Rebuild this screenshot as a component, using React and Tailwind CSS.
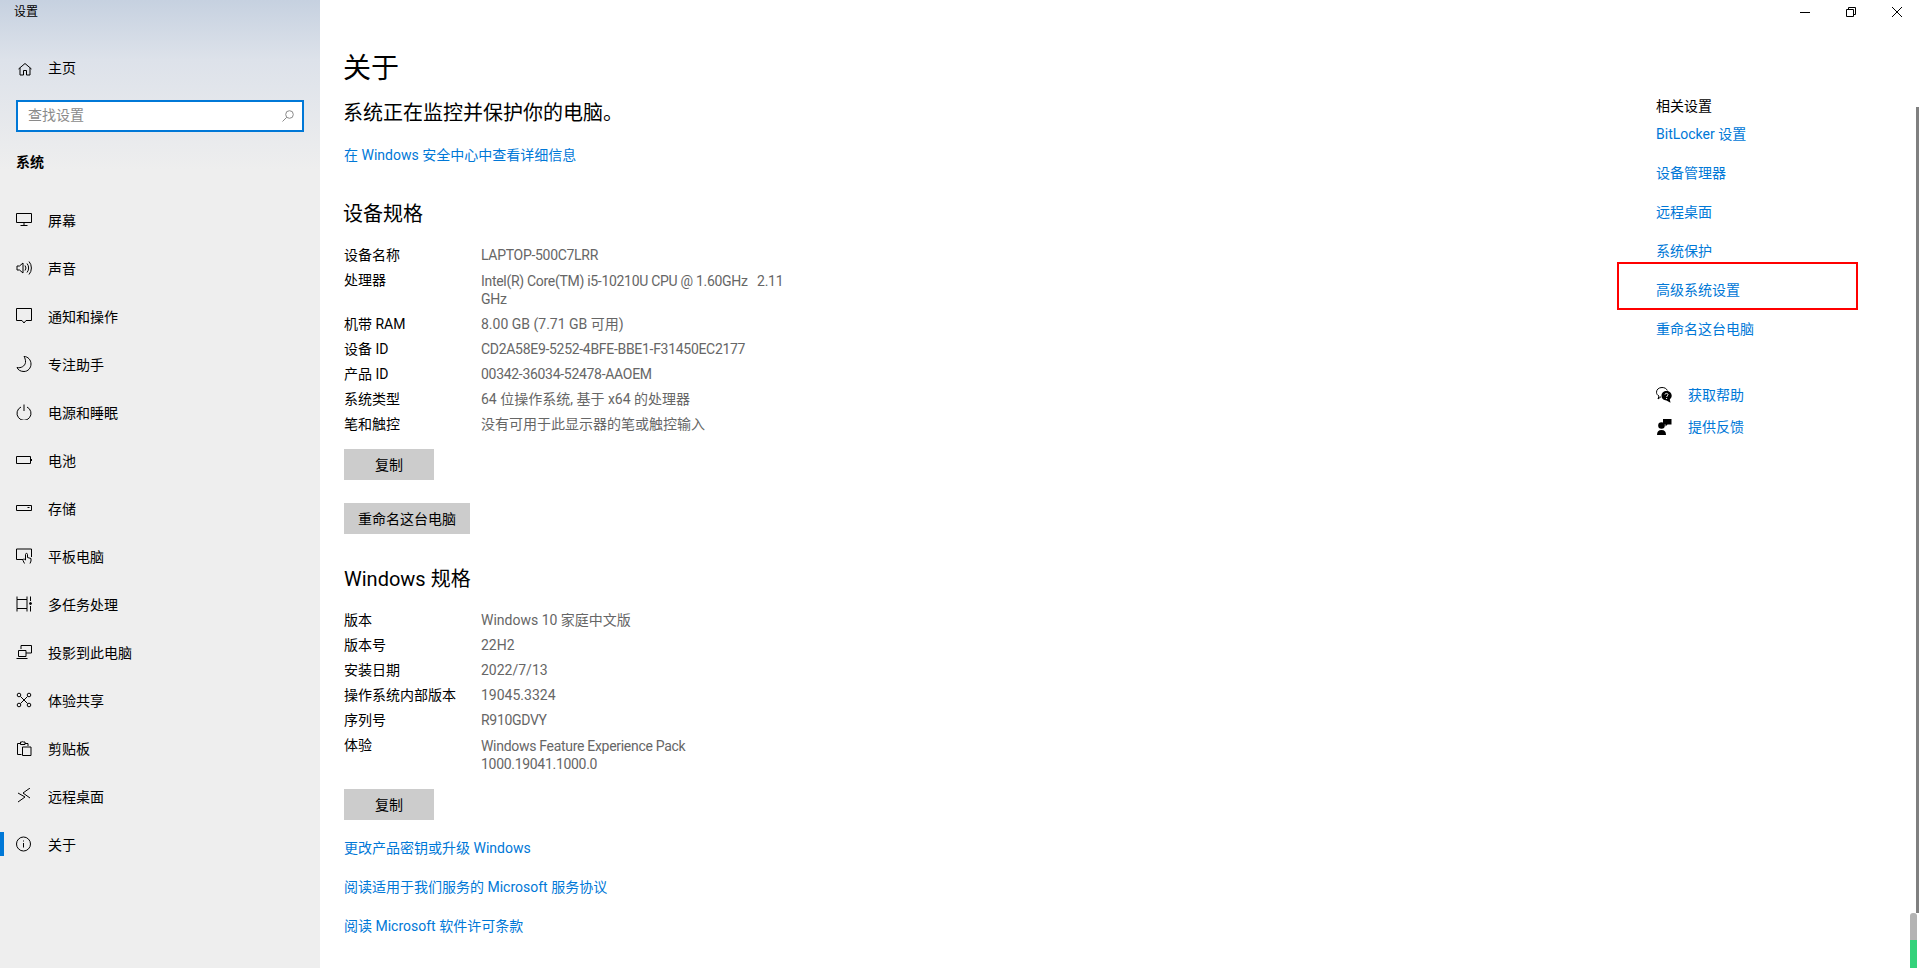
import React from 'react';

const Icon = ({ children, className = 'w-4 h-4' }) => (
  <svg viewBox="0 0 16 16" className={`${className} shrink-0`} fill="none" stroke="currentColor" strokeWidth="1">
    {children}
  </svg>
);

const navItems = [
  ['屏幕', <><path d="M.5 1.5H15.5V10.5H.5Z" /><path d="M8 10.5V13M4.5 13.5H11.5" /></>],
  ['声音', <><path d="M1 6H3.5L7 3V13L3.5 10H1Z" /><path d="M9 5.5a4 4 0 0 1 0 5M11 3.5a7 7 0 0 1 0 9M13 1.5a10 10 0 0 1 0 13" /></>],
  ['通知和操作', <path d="M.5.5H15.5V12.5H10L8 15L6 12.5H.5Z" />],
  ['专注助手', <path d="M8 .5C12 .5 15 4 15 8C15 12 12 15.5 8 15.5C4.5 15.5 2 14 1 11.5C5 12.5 9 10 9.5 6.5C9.7 4 9 2 8 .5Z" />],
  ['电源和睡眠', <path d="M5 3a7 7 0 1 0 6 0M8 .5V7" />],
  ['电池', <path d="M.5 4.5H14.5V11.5H.5ZM15.5 7V9" />],
  ['存储', <path d="M.5 5.5H15.5V10.5H.5ZM11.5 7.5H13.5" />],
  ['平板电脑', <path d="M7 11.5H.5V1H15.5V9M8.5 15.5L7 12.5C6.5 11 8 10.5 8.8 11.5L9.5 12V6.5C9.5 5 11.5 5 11.5 6.5V9.5L15 10.5V13L14 15.5" />],
  ['多任务处理', <><path d="M1 .5V3.5H11V.5M1 15.5V12.5H11V15.5M1 3.5V12.5M11 3.5V12.5M14.5 .5V5M14.5 10V15.5" /><circle cx="14.5" cy="7.5" r="1" fill="currentColor" /></>],
  ['投影到此电脑', <path d="M5 5V1.5H15.5V9H10M2.5 6.5H10V12.5H2.5ZM.5 14.5H11.5" />],
  ['体验共享', <><circle cx="3" cy="3" r="1.8" /><circle cx="13" cy="3" r="1.8" /><circle cx="3" cy="13" r="1.8" /><circle cx="13" cy="13" r="1.8" /><path d="M4.5 4.5L11.5 11.5M11.5 4.5L4.5 11.5" /></>],
  ['剪贴板', <path d="M5.5 14.5H1.5V3.5H4M9 3.5H12V6M4.5 4.5V2H6A1 1 0 0 1 7.5 2H9V4.5ZM6.5 7H15V15.5H6.5Z" />],
  ['远程桌面', <path d="M2 5L9 9L2 14M14 0L7 5L14 10" />],
  ['关于', <><circle cx="7.5" cy="8" r="7" /><path d="M7.5 7V11.5M7.5 4.5V5.5" /></>],
];

const deviceSpecs = [
  ['设备名称', 'LAPTOP-500C7LRR', false, true],
  ['处理器', 'Intel(R) Core(TM) i5-10210U CPU @ 1.60GHz   2.11 GHz', true, true],
  ['机带 RAM', '8.00 GB (7.71 GB 可用)'],
  ['设备 ID', 'CD2A58E9-5252-4BFE-BBE1-F31450EC2177', false, true],
  ['产品 ID', '00342-36034-52478-AAOEM', false, true],
  ['系统类型', '64 位操作系统, 基于 x64 的处理器'],
  ['笔和触控', '没有可用于此显示器的笔或触控输入'],
];

const windowsSpecs = [
  ['版本', 'Windows 10 家庭中文版'],
  ['版本号', '22H2'],
  ['安装日期', '2022/7/13'],
  ['操作系统内部版本', '19045.3324'],
  ['序列号', 'R910GDVY', false, true],
  ['体验', 'Windows Feature Experience Pack 1000.19041.1000.0', true, true],
];

const relatedLinks = ['BitLocker 设置', '设备管理器', '远程桌面', '系统保护', '高级系统设置', '重命名这台电脑'];

const SpecRows = ({ rows }) => (
  <div className="mt-[18px] flex flex-col">
    {rows.map(([label, value, tall, tight]) => (
      <div key={label} className={`flex text-sm ${tall ? 'h-[44px]' : 'h-[25px]'}`}>
        <div className="w-[137px] shrink-0 leading-5 text-black">{label}</div>
        <div className={`w-[305px] whitespace-pre-wrap text-[#666666] ${tall ? 'pt-[2px] leading-[18px]' : 'leading-5'} ${tight ? 'tracking-[-0.3px]' : ''}`}>{value}</div>
      </div>
    ))}
  </div>
);

const GrayButton = ({ className = 'w-[90px]', margin, children }) => (
  <button className={`${className} ${margin} block h-[31px] bg-[#cccccc] text-sm text-black`}>{children}</button>
);

const Heading = ({ margin, children }) => (
  <h2 className={`${margin} h-[27px] text-xl leading-[28px] text-black`}>{children}</h2>
);

const Link = ({ children }) => <a className="block h-5 text-sm leading-5 text-[#0078d7]">{children}</a>;

export default function App() {
  return (
    <div className="relative flex h-[968px] w-full overflow-hidden bg-white font-['Roboto','Noto_Sans_CJK_SC',sans-serif]">
      {/* Sidebar */}
      <aside className="flex w-[320px] shrink-0 flex-col bg-[linear-gradient(180deg,#c6d1e0_0px,#dde2ea_60px,#eeeeee_170px)]">
        <div className="flex h-6 items-center pl-[14px] text-xs text-black">设置</div>
        <div className="mt-5 flex h-12 items-center gap-4 pl-4 text-sm text-black">
          <Icon>
            <path d="M2.5 9L9 3.5L15.5 9M4 8V15H7.5V10.5H10.5V15H14V8" />
          </Icon>
          <span>主页</span>
        </div>
        <div className="mx-4 mt-2 flex h-8 items-center justify-between border-2 border-[#0078d7] bg-white pr-2 pl-[10px] text-sm text-[#8a8a8a]">
          <span className="pb-[2px]">查找设置</span>
          <svg viewBox="0 0 12 12" className="h-3 w-3" fill="none" stroke="#8a8a8a" strokeWidth="1">
            <circle cx="7.5" cy="4.5" r="3.8" />
            <path d="M4.8 7.2L.5 11.5" />
          </svg>
        </div>
        <div className="mt-[14px] mb-[18px] flex h-8 items-center pl-4 text-sm font-bold text-black">系统</div>
        <nav className="flex flex-col">
          {navItems.map(([label, icon]) => (
            <div key={label} className="relative flex h-12 items-center gap-4 pl-4 text-sm text-black">
              <Icon>{icon}</Icon>
              <span className="pt-px">{label}</span>
              {label === '关于' && <div className="absolute top-3 left-0 h-6 w-1 bg-[#0078d7]" />}
            </div>
          ))}
        </nav>
      </aside>

      {/* Main Content */}
      <main className="flex flex-1 justify-between pl-6">
        <section className="pt-[49px]">
          <h1 className="-ml-px h-10 text-[28px] leading-10 text-black">关于</h1>
          <p className="mt-[10px] -ml-px h-[28px] text-xl leading-[28px] text-black">系统正在监控并保护你的电脑。</p>
          <div className="mt-[18px]">
            <Link>在 Windows 安全中心中查看详细信息</Link>
          </div>

          <Heading margin="mt-[35px] -ml-px">设备规格</Heading>
          <SpecRows rows={deviceSpecs} />
          <GrayButton margin="mt-[10px]">复制</GrayButton>
          <GrayButton className="w-[126px]" margin="mt-[23px]">重命名这台电脑</GrayButton>

          <Heading margin="mt-[31px]">Windows 规格</Heading>
          <SpecRows rows={windowsSpecs} />
          <GrayButton margin="mt-[10px]">复制</GrayButton>

          <div className="mt-[18px] flex flex-col gap-[19px]">
            <Link>更改产品密钥或升级 Windows</Link>
            <Link>阅读适用于我们服务的 Microsoft 服务协议</Link>
            <Link>阅读 Microsoft 软件许可条款</Link>
          </div>
        </section>

        <section className="w-[263px] pt-[96px]">
          <div className="h-5 text-sm leading-5 text-black">相关设置</div>
          <div className="mt-[8px] flex flex-col gap-[19px]">
            {relatedLinks.map((label) => (
              <Link key={label}>{label}</Link>
            ))}
          </div>
          <div className="mt-[46px] flex flex-col gap-3">
            <div className="flex h-5 items-center gap-4">
              <svg viewBox="0 0 16 16" className="h-4 w-4 shrink-0 text-black">
                <path d="M6 .5C2.8 .5.5 2.5.5 5.2C.5 7 1.5 8.3 3 9L2 12L5 9.7" fill="none" stroke="currentColor" />
                <path d="M6 .5C8.5 .5 10.5 1.5 11.3 3.5" fill="none" stroke="currentColor" />
                <path d="M10.5 4C7.7 4 5.5 6 5.5 8.8C5.5 11.5 7.7 13.5 10.5 13.5L14.5 15.8L13.8 12.3C15 11.4 15.7 10.2 15.7 8.8C15.7 6 13.3 4 10.5 4Z" fill="currentColor" />
                <path d="M9 7.5C9 6 12 6 12 7.6C12 8.8 10.6 8.8 10.6 10" fill="none" stroke="#fff" />
                <path d="M10.1 11H11.1V12H10.1Z" fill="#fff" />
              </svg>
              <Link>获取帮助</Link>
            </div>
            <div className="flex h-5 items-center gap-4">
              <svg viewBox="0 0 16 16" className="h-4 w-4 shrink-0 text-black" fill="currentColor">
                <circle cx="5.5" cy="6.5" r="3.3" />
                <path d="M1 16C1 12.5 2.5 11 5.5 11C8.5 11 10 12.5 10 16Z" />
                <path d="M7 0H15.5V5.5H11.5L9.5 7.5V5.5H7Z" />
              </svg>
              <Link>提供反馈</Link>
            </div>
          </div>
        </section>
      </main>

      {/* Red annotation */}
      <div className="absolute top-[262px] left-[1617px] h-[48px] w-[241px] border-2 border-[#ff0000]" />

      {/* Window controls */}
      <div className="absolute top-0 -right-px flex h-6 text-black">
        <button className="flex h-6 w-[46px] items-center justify-center">
          <svg viewBox="0 0 10 10" className="h-[10px] w-[10px]" fill="none" stroke="currentColor">
            <path d="M0 5.5H10" />
          </svg>
        </button>
        <button className="flex h-6 w-[46px] items-center justify-center">
          <svg viewBox="0 0 10 10" className="h-[10px] w-[10px]" fill="none" stroke="currentColor">
            <path d="M.5 2.5H7.5V9.5H.5ZM2.5 2.5V.5H9.5V7.5H7.5" />
          </svg>
        </button>
        <button className="flex h-6 w-[46px] items-center justify-center">
          <svg viewBox="0 0 10 10" className="h-[10px] w-[10px]" fill="none" stroke="currentColor">
            <path d="M0 0L10 10M10 0L0 10" />
          </svg>
        </button>
      </div>

      {/* Scrollbar */}
      <div className="absolute top-[107px] right-0 h-[806px] w-[3px] bg-[#808080]" />
      <div className="absolute top-[913px] right-[2px] flex h-[55px] w-[7px] flex-col overflow-hidden rounded-t-[3px]">
        <div className="h-[27px] bg-[#b4b4b4]" />
        <div className="flex-1 bg-[#34d27b]" />
      </div>
    </div>
  );
}
